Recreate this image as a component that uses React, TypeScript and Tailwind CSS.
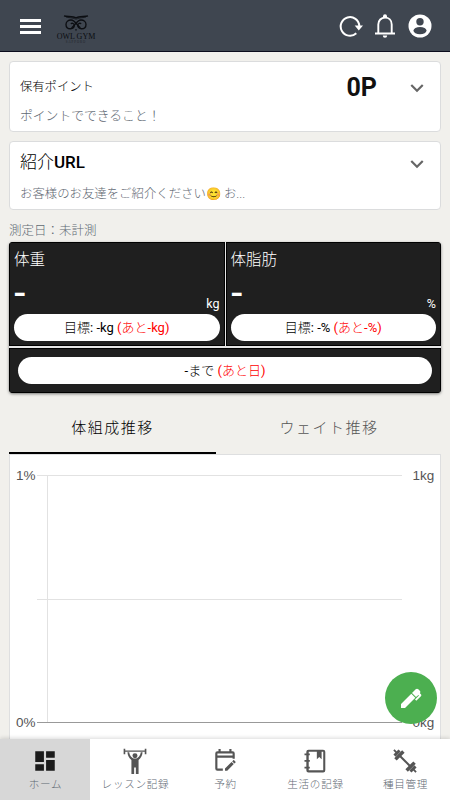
import type { ReactNode } from "react";
import clsx from "clsx";

interface IconProps {
    className?: string;
    children: ReactNode;
}

function Icon({ className, children }: IconProps) {
    return (
        <svg viewBox="0 0 24 24" fill="currentColor" className={clsx("shrink-0", className)}>
            {children}
        </svg>
    );
}

function OwlLogo() {
    return (
        <div className="flex w-[40px] flex-col items-center text-[#0c0e12]">
            <svg viewBox="0 0 26 17" className="h-[17px] w-[26px]" fill="none" stroke="currentColor">
                <path d="M1 .9C4 2 10 .9 13 2.900C16 .9 22 2 25 .9" strokeWidth="1.300" />
                <path d="M3 2C5 2.900 9 2.400 13 4.200C17 2.400 21 2.900 23 2" strokeWidth="0.700" />
                <path d="M17.500 12.800C14.500 11.500 12.500 5 8 5C5.200 5 3 6.900 3 9.400C3 12 5 13.700 7.500 13.700C10 13.700 11.300 12 11.300 10.300C11.300 8.600 9.300 7.700 7.800 8.800" strokeWidth="1.350" />
                <path d="M8.500 12.800C11.500 11.500 13.500 5 18 5C20.800 5 23 6.900 23 9.400C23 12 21 13.700 18.500 13.700C16 13.700 14.700 12 14.700 10.300C14.700 8.600 16.700 7.700 18.200 8.800" strokeWidth="1.350" />
                <path d="M12 14.200h2l-1 2z" fill="currentColor" stroke="none" />
            </svg>
            <span className="mt-px font-['Liberation_Serif'] text-[8px] leading-[8px] whitespace-nowrap">OWL GYM</span>
            <span className="h-[3px] font-['Liberation_Serif'] text-[3px] leading-[3px] tracking-[1px] opacity-60">SAPPORO</span>
        </div>
    );
}

function Header() {
    return (
        <header className="flex h-[52px] shrink-0 items-center border-b border-[#0b0c1c] bg-[#3f4650] pr-[18px] pl-5 text-white">
            <div className="mt-px flex w-[21px] flex-col gap-[3px]">
                <span className="h-[3px] bg-white" />
                <span className="h-[3px] bg-white" />
                <span className="h-[3px] bg-white" />
            </div>
            <div className="mt-[7px] ml-[15px]">
                <OwlLogo />
            </div>
            <div className="ml-auto flex items-center">
                <svg viewBox="0 0 24 24" className="mr-[11px] h-6 w-6" fill="none">
                    <path d="M17.300 19.300A9.300 9.300 0 1 1 20.300 12" stroke="currentColor" strokeWidth="2" />
                    <path d="M15.700 11.500H24L19.800 16.500Z" fill="currentColor" />
                </svg>
                <svg viewBox="0 0 22 24" className="mr-[12px] h-6 w-[22px]" fill="none">
                    <path d="M4.300 19V10.500C4.300 6.300 7.200 3.600 11 3.600S17.700 6.300 17.700 10.500V19" stroke="currentColor" strokeWidth="1.900" />
                    <path d="M1 19.500H21" stroke="currentColor" strokeWidth="2" />
                    <path d="M9 3.500V2.300a2 2 0 0 1 4 0V3.500ZM8.800 21.500H13.200a2.200 2.200 0 0 1-4.400 0Z" fill="currentColor" />
                </svg>
                <svg viewBox="0 0 24 24" className="h-6 w-6">
                    <circle cx="12" cy="12" r="11.500" fill="currentColor" />
                    <circle cx="12" cy="7.700" r="3.700" fill="#3f4650" />
                    <ellipse cx="12" cy="16.600" rx="6.500" ry="3.600" fill="#3f4650" />
                </svg>
            </div>
        </header>
    );
}

function Chevron({ className }: { className?: string }) {
    return (
        <Icon className={clsx("h-[26px] w-[26px] text-[#666]", className)}>
            <path d="M7.410 8.580L12 13.170l4.590-4.590L18 10l-6 6-6-6z" />
        </Icon>
    );
}

interface GoalCardProps {
    label: string;
    unit: string;
}

function GoalCard({ label, unit }: GoalCardProps) {
    return (
        <div className="flex h-[104px] flex-1 flex-col border border-black bg-[#1f1f1f] px-1 text-white">
            <p className="mt-[5px] text-[15.500px] leading-6 font-light">{label}</p>
            <p className="mt-[7px] ml-[-1px] origin-left scale-x-120 text-[29px] leading-[28px] font-bold">-</p>
            <p className="mt-[-12px] text-right text-[12.500px] leading-[17px]">{unit}</p>
            <div className="mt-[2px] h-[27px] rounded-full bg-white text-center text-[13px] leading-[27px] text-black">
                <span className="font-light">目標</span>: -{unit} <span className="text-[#f00]">(<span className="font-light">あと</span>-{unit})</span>
            </div>
        </div>
    );
}

function Chart() {
    return (
        <svg viewBox="0 0 430 284" className="h-[284px] w-full" fontFamily="'Liberation Sans', sans-serif" fontSize="13.500" fill="#555">
            <path d="M27 20.500H392M27 144.500H392M37.500 20V267" stroke="#e2e2e2" fill="none" />
            <path d="M27 267.500H392" stroke="#999" />
            <text x="6" y="25">1%</text>
            <text x="6" y="272">0%</text>
            <text x="402.500" y="25">1kg</text>
            <text x="402.500" y="272">0kg</text>
        </svg>
    );
}

const navItems = [
    {
        label: "ホーム",
        active: true,
        icon: <path d="M13 3v6h8V3m-8 18h8V11h-8M3 21h8v-6H3m0-2h8V3H3v10Z" />,
    },
    {
        label: "レッスン記録",
        icon: (
            <>
                <circle cx="12" cy="7.200" r="2.300" />
                <path d="M1.500 .8H3v1.400h18V.8h1.500v5H21V3.500H3v2.300H1.500ZM5 4h1.700c.3 2.900 2.100 5.800 5.300 5.800s5-2.900 5.300-5.800H19c-.3 3.300-1.600 5.600-3.700 7.100V24h-2.500v-6h-1.600v6H8.700V11.100C6.600 9.600 5.300 7.300 5 4Z" />
            </>
        ),
    },
    {
        label: "予約",
        icon: <path d="M19 3h-1V1h-2v2H8V1H6v2H5a2 2 0 0 0-2 2v14a2 2 0 0 0 2 2h5v-2H5V9h14v1h2V5a2 2 0 0 0-2-2m0 4H5V5h14v2m2.700 6.350-1 1-2.050-2 1-1c.2-.21.540-.22.770 0l1.280 1.280c.19.2.19.520 0 .720M12 18.940l6.070-6.060 2.050 2L14.060 21H12v-2.060Z" />,
    },
    {
        label: "生活の記録",
        icon: (
            <>
                <path fillRule="evenodd" d="M6 1.500h13.500a2 2 0 0 1 2 2v17a2 2 0 0 1-2 2H6a2 2 0 0 1-2-2v-17a2 2 0 0 1 2-2m.2 1.900v17.200h13.400V3.400h-1.500v7l-2.200-2-2.200 2v-7Z" />
                <path d="M2.300 5h4.900v1.700H2.300ZM2.300 11.100h4.900v1.700H2.300ZM2.300 17.200h4.900v1.700H2.300Z" />
            </>
        ),
    },
    {
        label: "種目管理",
        icon: (
            <g fill="none" stroke="currentColor">
                <path d="M6 6L18 18" strokeWidth="1.900" />
                <path d="M3.200 10.500L10.500 3.200M13.500 20.800L20.800 13.500" strokeWidth="3.200" />
                <path d="M2.300 7L7 2.300M17 21.700L21.700 17" strokeWidth="2.800" />
                <path d="M1.800 1.800L4 4M20 20L22.200 22.200" strokeWidth="1.700" />
            </g>
        ),
    },
];

function BottomNav() {
    return (
        <nav className="flex h-[61px] shrink-0 bg-white shadow-[0_-1px_4px_rgba(0,0,0,0.15)]">
            {navItems.map((item) => (
                <div
                    key={item.label}
                    className={clsx(
                        "flex w-[90px] flex-col items-center pt-[9px]",
                        item.active ? "bg-[#d7d7d7] text-[#1b1b1b]" : "text-[#555]"
                    )}
                >
                    <Icon className="h-[26px] w-[26px]">{item.icon}</Icon>
                    <span className="mt-[3px] pl-px text-[10.600px] leading-4 font-light tracking-[0.700px] whitespace-nowrap text-[#5f6973]">
                        {item.label}
                    </span>
                </div>
            ))}
        </nav>
    );
}

export default function App() {
    return (
        <div className="relative flex h-[800px] w-[450px] flex-col overflow-hidden bg-[#f1f0ec] font-[Roboto,'Noto_Sans_CJK_JP',sans-serif] text-black">
            <Header />
            <main className="min-h-0 flex-1 overflow-hidden px-[9px] pt-[9px]">
                <section className="flex h-[71px] flex-col rounded-[4px] border border-[#dbdcdd] bg-white px-[10px] pt-[9px]">
                    <div className="flex h-[33px] items-center">
                        <span className="text-[12.300px] font-light">保有ポイント</span>
                        <span className="ml-auto text-[25px] font-bold text-[#111]">0P</span>
                        <Chevron className="ml-[27px]" />
                    </div>
                    <p className="mt-[2px] text-[12.800px] leading-5 font-light text-[#5f6973]">ポイントでできること！</p>
                </section>

                <section className="mt-[9px] flex h-[69px] flex-col rounded-[4px] border border-[#dbdcdd] bg-white px-[10px] pt-[7px]">
                    <div className="flex h-[30px] items-center">
                        <span className="mt-[-2px] text-[17px] font-light">
                            紹介<span className="font-medium">URL</span>
                        </span>
                        <Chevron className="ml-auto" />
                    </div>
                    <p className="mt-[5px] text-[12.400px] leading-5 font-light text-[#5f6973]">お客様のお友達をご紹介ください😊 お...</p>
                </section>

                <p className="mt-[11px] text-[12.500px] leading-[20px] font-light text-[#5f6973]">測定日：未計測</p>

                <section className="mt-px overflow-hidden rounded-[4px] bg-[#e5e5e5] shadow-[0_1px_3px_rgba(0,0,0,0.500)]">
                    <div className="flex gap-px">
                        <GoalCard label="体重" unit="kg" />
                        <GoalCard label="体脂肪" unit="%" />
                    </div>
                    <div className="mt-[2px] h-[45px] border border-black bg-[#1f1f1f] px-2 pt-[8px]">
                        <div className="h-[27px] rounded-full bg-white text-center text-[13px] leading-[27px]">
                            -<span className="font-light">まで</span> <span className="text-[#f00]">(<span className="font-light">あと日</span>)</span>
                        </div>
                    </div>
                </section>

                <div className="mt-[9px] flex h-[52px] text-center text-[15px] leading-[53px] font-light tracking-[1.500px]">
                    <div className="w-[207px] border-b-2 border-black">体組成推移</div>
                    <div className="flex-1 pl-px text-[#555]">ウェイト推移</div>
                </div>
                <section className="border border-[#dedfe0] bg-white">
                    <Chart />
                </section>
            </main>
            <button className="absolute top-[672px] left-[385px] flex h-[52px] w-[52px] items-center justify-center rounded-full bg-[#4caf50] text-white">
                <svg viewBox="0 0 24 24" className="h-6 w-6" fill="currentColor">
                    <path d="M2 22V18L12.300 7.700L16.300 11.700L6 22ZM13 7L16.700 3.300C17.500 2.500 18.500 2.500 19.300 3.300L20.800 4.800C21.500 5.500 21.500 6.400 20.900 7.200L21.900 8.200C22.500 8.800 22.500 9.600 21.900 10.200L17.300 14.800L16 13.500L20 9.500L19.500 9L17 11Z" />
                </svg>
            </button>
            <BottomNav />
        </div>
    );
}
